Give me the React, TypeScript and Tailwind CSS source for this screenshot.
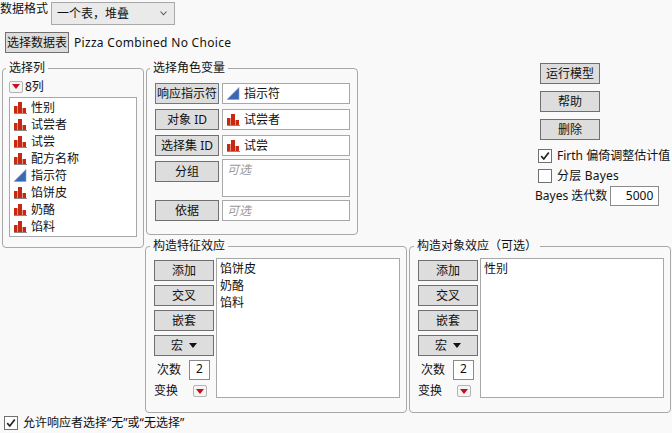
import type { ReactNode } from "react";

const FONT = "font-['Segoe_UI','Noto_Sans','Noto_Sans_CJK_SC',sans-serif]";

const columns = [
  { name: "性别", kind: "nominal" },
  { name: "试尝者", kind: "nominal" },
  { name: "试尝", kind: "nominal" },
  { name: "配方名称", kind: "nominal" },
  { name: "指示符", kind: "continuous" },
  { name: "馅饼皮", kind: "nominal" },
  { name: "奶酪", kind: "nominal" },
  { name: "馅料", kind: "nominal" },
];

function NominalIcon() {
  return (
    <svg width="13" height="13" viewBox="0 0 13 13" className="shrink-0">
      <rect x="0" y="5" width="3.5" height="7" fill="#c8280f" />
      <rect x="4" y="1" width="4" height="11" fill="#c8280f" />
      <rect x="8.5" y="7" width="3.5" height="5" fill="#c8280f" />
      <rect x="0" y="12" width="13" height="1" fill="#8a8a8a" />
    </svg>
  );
}

function ContinuousIcon() {
  return (
    <svg width="13" height="13" viewBox="0 0 13 13" className="shrink-0">
      <polygon points="0,12.5 12,0.5 12,12.5" fill="#3a68b4" stroke="#8a9cc0" strokeWidth="0.6" />
    </svg>
  );
}

function Btn({ children, w, active }: { children: ReactNode; w: string; active?: boolean }) {
  return (
    <button
      className={`${w} h-[21px] shrink-0 flex items-center justify-center border ${
        active ? "border-[#6a7a8a]" : "border-[#707070]"
      } bg-[#dddddd] text-[12px] leading-none text-[#111]`}
    >
      {children}
    </button>
  );
}

function RedMenu() {
  return (
    <span className="flex h-[12px] w-[14px] items-center justify-center rounded-[2px] border border-[#b4b4b4] bg-[#f4f4f4]">
      <svg width="8" height="5" viewBox="0 0 8 5">
        <polygon points="0,0 8,0 4,5" fill="#c80f1e" />
      </svg>
    </span>
  );
}

function Check({ checked }: { checked?: boolean }) {
  return (
    <span className="flex h-[14px] w-[14px] shrink-0 items-center justify-center border border-[#707070] bg-white">
      {checked && (
        <svg width="10" height="10" viewBox="0 0 10 10">
          <path d="M1.2 5.2 L3.8 8 L8.8 1.5" fill="none" stroke="#222" strokeWidth="1.7" />
        </svg>
      )}
    </span>
  );
}

function Group({ title, className, legend, children }: { title: string; className: string; legend: string; children: ReactNode }) {
  return (
    <fieldset className={`shrink-0 rounded-[4px] border border-[#a8a8a8] ${className}`}>
      <legend className={`${legend} px-[3px] text-[12px] leading-[14px] text-[#111]`}>{title}</legend>
      {children}
    </fieldset>
  );
}

function RoleRow({ label, active, children, tall }: { label: string; active?: boolean; children: ReactNode; tall?: boolean }) {
  return (
    <div className="flex gap-[3px]">
      <Btn w="w-[64px]" active={active}>
        {label}
      </Btn>
      <div
        className={`flex w-[128px] items-start gap-[4px] border border-[#a8a8a8] bg-white px-[4px] pt-[3px] text-[12px] leading-[14px] ${
          tall ? "-my-[2px] h-[38px]" : "h-[21px]"
        }`}
      >
        {children}
      </div>
    </div>
  );
}

const Optional = () => <span className="italic text-[#9a9a9a]">可选</span>;

function EffectsGroup({ title, items }: { title: string; items: string[] }) {
  return (
    <Group title={title} legend="-ml-[4px]" className="h-[174px] w-[262px] pl-[8px] pr-[6px] pt-[5px]">
      <div className="flex gap-[2px]">
        <div className="flex w-[60px] shrink-0 flex-col pt-[2px]">
          <div className="flex flex-col gap-[4px]">
            <Btn w="w-[60px]">添加</Btn>
            <Btn w="w-[60px]">交叉</Btn>
            <Btn w="w-[60px]">嵌套</Btn>
            <Btn w="w-[60px]">
              <span className="flex items-center gap-[6px]">
                宏
                <svg width="8" height="5" viewBox="0 0 8 5">
                  <polygon points="0,0 8,0 4,5" fill="#111" />
                </svg>
              </span>
            </Btn>
          </div>
          <div className="mt-[4px] flex items-center pl-[3px] text-[12px] leading-[14px]">
            <span className="w-[32px]">次数</span>
            <span className="flex h-[20px] w-[21px] justify-center border border-[#8a8a8a] bg-white pt-[1px]">2</span>
          </div>
          <div className="mt-[4px] flex items-center text-[12px] leading-[14px]">
            <span className="w-[39px]">变换</span>
            <RedMenu />
          </div>
        </div>
        <div className="h-[140px] flex-1 border border-[#a8a8a8] bg-white px-[3px] pt-[1px] text-[12px] leading-[17px]">
          {items.map((item) => (
            <div key={item}>{item}</div>
          ))}
        </div>
      </div>
    </Group>
  );
}

export default function App() {
  return (
    <div className={`h-[433px] w-[672px] overflow-hidden bg-[#f9f9f9] text-[#111] ${FONT}`}>
      {/* Data format */}
      <div className="flex h-[32px] items-start gap-[3px]">
        <span className="text-[12px] leading-[17px]">数据格式</span>
        <div className="mt-[2px] flex h-[23px] w-[124px] items-center justify-between border border-[#a8a8a8] bg-[#eaeaea] pl-[5px] pr-[7px] text-[12px]">
          一个表，堆叠
          <svg width="7" height="5" viewBox="0 0 7 5">
            <path d="M0.5 0.5 L3.5 3.8 L6.5 0.5" fill="none" stroke="#555" strokeWidth="1.1" />
          </svg>
        </div>
      </div>
      <div className="ml-[5px] flex h-[21px] items-center gap-[5px] text-[12px]">
        <span className="flex h-[21px] w-[64px] items-center justify-center border border-[#707070] bg-[#dddddd]">选择数据表</span>
        <span className="tracking-[0.3px]">Pizza Combined No Choice</span>
      </div>

      <div className="flex pt-[8px]">
        {/* Column list */}
        <Group title="选择列" legend="-ml-[3px]" className="ml-[2px] h-[187px] w-[142px] pl-[6px]">
          <div className="mt-[3px] flex h-[17px] items-center gap-[2px] text-[12px]">
            <RedMenu />
            8列
          </div>
          <div className="mt-[2px] h-[140px] w-[128px] border border-[#a8a8a8] bg-white pl-[4px] pt-[1px] text-[12px]">
            {columns.map((c) => (
              <div key={c.name} className="flex h-[17px] items-center gap-[4px]">
                {c.kind === "nominal" ? <NominalIcon /> : <ContinuousIcon />}
                {c.name}
              </div>
            ))}
          </div>
        </Group>

        <div className="ml-[1px] flex flex-col">
          <div className="flex">
            {/* Roles */}
            <Group title="选择角色变量" legend="-ml-[5px]" className="ml-[1px] h-[174px] w-[212px] pl-[8px]">
              <div className="flex flex-col gap-[5px] pt-[8px]">
                <RoleRow label="响应指示符" active>
                  <ContinuousIcon />
                  指示符
                </RoleRow>
                <RoleRow label="对象 ID">
                  <NominalIcon />
                  试尝者
                </RoleRow>
                <RoleRow label="选择集 ID">
                  <NominalIcon />
                  试尝
                </RoleRow>
                <RoleRow label="分组" tall>
                  <Optional />
                </RoleRow>
                <RoleRow label="依据">
                  <Optional />
                </RoleRow>
              </div>
            </Group>

            {/* Actions */}
            <div className="ml-[180px] flex w-[134px] shrink-0 flex-col pt-[2px]">
              <div className="ml-[2px] flex flex-col gap-[7px]">
                <Btn w="w-[60px]">运行模型</Btn>
                <Btn w="w-[60px]">帮助</Btn>
                <Btn w="w-[60px]">删除</Btn>
              </div>
              <label className="mt-[9px] flex items-center gap-[5px] whitespace-nowrap text-[12px] leading-[14px]">
                <Check checked />
                Firth 偏倚调整估计值
              </label>
              <label className="mt-[6px] flex items-center gap-[5px] text-[12px] leading-[14px]">
                <Check />
                <span className="tracking-[0.2px]">分层 Bayes</span>
              </label>
              <div className="-ml-[3px] mt-[3px] flex items-center gap-[3px] whitespace-nowrap text-[12px]">
                Bayes 迭代数
                <span className="flex h-[20px] w-[49px] items-center justify-end border border-[#8a8a8a] bg-white pr-[5px]">5000</span>
              </div>
            </div>
          </div>
          <div className="mt-[4px] flex gap-[2px]">
            <EffectsGroup title="构造特征效应" items={["馅饼皮", "奶酪", "馅料"]} />
            <EffectsGroup title="构造对象效应（可选）" items={["性别"]} />
          </div>
        </div>
      </div>

      <label className="ml-[4px] mt-[3px] flex items-center gap-[5px] text-[12px] leading-[14px]">
        <Check checked />
        允许响应者选择“无”或“无选择”
      </label>
    </div>
  );
}
